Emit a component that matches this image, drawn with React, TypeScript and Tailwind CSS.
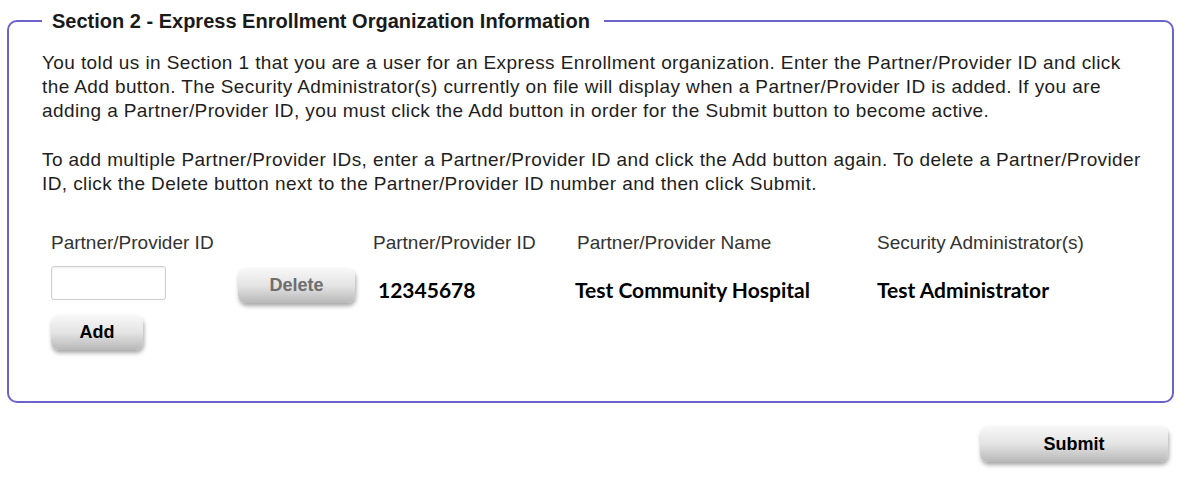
import React from "react";

// gray glossy button used across the form
function GlossButton({
  label,
  disabled,
  className,
}: {
  label: string;
  disabled?: boolean;
  className: string;
}) {
  return (
    <button
      type="button"
      disabled={disabled}
      className={`rounded-[8px] bg-gradient-to-b from-[#f8f8f8] via-[#e4e4e4] to-[#b8b8b8] shadow-[1px_3px_4px_rgba(0,0,0,0.35)] font-bold text-[18px] ${
        disabled ? "text-[#6e6e6e]" : "text-black"
      } ${className}`}
    >
      {label}
    </button>
  );
}

export default function App() {
  const rows = [
    {
      id: "12345678",
      name: "Test Community Hospital",
      admin: "Test Administrator",
    },
  ];

  return (
    <div className="w-[1190px] h-[478px] bg-white font-['Liberation_Sans',Arial,sans-serif] text-[#1e1e1e] overflow-hidden">
      <div className="pt-[9px] pl-[7px] pr-[17px]">
        <fieldset className="border-2 border-[#6b63c9] rounded-[10px] h-[394px] pl-[33px] pr-[20px]">
          <legend className="pl-[10px] pr-[14px] text-[20px] font-bold text-[#1a1a1a] leading-[24px]">
            Section 2 - Express Enrollment Organization Information
          </legend>

          {/* instructions */}
          <div className="mt-[18px] w-[1110px] text-[19px] tracking-[0.4px] leading-[24px]">
            <p>
              You told us in Section 1 that you are a user for an Express
              Enrollment organization. Enter the Partner/Provider ID and click
              the Add button. The Security Administrator(s) currently on file
              will display when a Partner/Provider ID is added. If you are
              adding a Partner/Provider ID, you must click the Add button in
              order for the Submit button to become active.
            </p>
            <p className="mt-[25px]">
              To add multiple Partner/Provider IDs, enter a Partner/Provider ID
              and click the Add button again. To delete a Partner/Provider ID,
              click the Delete button next to the Partner/Provider ID number and
              then click Submit.
            </p>
          </div>

          {/* entry + list */}
          <div className="flex mt-[35px] pl-[9px]">
            <div className="w-[187px] flex flex-col">
              <div className="text-[19px] text-[#333] leading-[24px]">
                Partner/Provider ID
              </div>
              <input
                type="text"
                className="mt-[11px] w-[115px] h-[34px] border border-[#cfcfcf] rounded-[3px] shadow-[inset_0_1px_2px_rgba(0,0,0,0.08)]"
              />
              <GlossButton label="Add" className="mt-[15px] w-[92px] h-[35px]" />
            </div>

            <div className="w-[135px] pt-[37px]">
              <GlossButton
                label="Delete"
                disabled
                className="w-[117px] h-[35px]"
              />
            </div>

            <div className="flex-1">
              <div className="flex text-[19px] text-[#333] leading-[24px]">
                <div className="w-[204px]">Partner/Provider ID</div>
                <div className="w-[300px]">Partner/Provider Name</div>
                <div>Security Administrator(s)</div>
              </div>
              {rows.map((r) => (
                <div
                  key={r.id}
                  className="flex mt-[22px] font-['Lato','Open_Sans',sans-serif] font-bold text-[21px] text-black leading-[26px]"
                >
                  <div className="w-[202px] pl-[5px]">{r.id}</div>
                  <div className="w-[300px]">{r.name}</div>
                  <div className="pl-[2px]">{r.admin}</div>
                </div>
              ))}
            </div>
          </div>
        </fieldset>
      </div>

      <div className="flex justify-end pr-[22px] mt-[23px]">
        <GlossButton label="Submit" className="w-[188px] h-[36px]" />
      </div>
    </div>
  );
}
